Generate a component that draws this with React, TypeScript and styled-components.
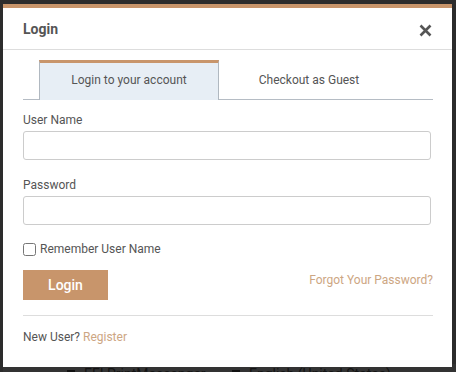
import * as React from "react"
import styled, { createGlobalStyle } from "styled-components"

const tan = "#c8956b"

const GlobalStyle = createGlobalStyle`
  html, body {
    margin: 0;
    background-color: #2c2c2c;
    font-family: Roboto, "Liberation Sans", sans-serif;
  }
`

const Page = styled.div`
  height: 372px;
  overflow: hidden;
  padding: 4px 0 0 3px;
  box-sizing: border-box;
`

const Modal = styled.div`
  position: relative;
  z-index: 1;
  width: 449px;
  background-color: #fff;
  border-top: 4px solid ${tan};
`

const Header = styled.header`
  display: flex;
  align-items: center;
  justify-content: space-between;
  height: 41px;
  padding: 0 20px;
  border-bottom: 1px solid #ddd;
`

const Title = styled.h4`
  margin: 0;
  font-size: 14px;
  font-weight: bold;
  color: #555;
`

const Close = styled.button`
  display: flex;
  padding: 0;
  margin-top: 3px;
  border: 0;
  background: none;
  cursor: pointer;
`

const Body = styled.div`
  padding: 10px 19px 20px 20px;
`

const TabList = styled.div`
  display: flex;
  padding-left: 16px;
  border-bottom: 1px solid #b5bcc4;
`

interface TabProps {
  active?: boolean
}
const Tab = styled.button<TabProps>`
  width: 180px;
  height: 40px;
  margin-bottom: -1px;
  padding: 0 0 4px;
  font-family: inherit;
  font-size: 12px;
  color: #555;
  background-color: ${(p) => p.active ? "#e7eef5" : "transparent"};
  border: 1px solid ${(p) => p.active ? "#b0b8c0" : "transparent"};
  border-top: 3px solid ${(p) => p.active ? tan : "transparent"};
  border-bottom: 0;
`

interface LabelProps {
  gap: number
}
const Label = styled.label<LabelProps>`
  display: block;
  margin: ${(p) => p.gap}px 0 2px;
  font-size: 12px;
  line-height: 18px;
  color: #555;
`

const Input = styled.input`
  display: block;
  box-sizing: border-box;
  width: 408px;
  height: 29px;
  border: 1px solid #ccc;
  border-radius: 3px;
  font-family: inherit;
  font-size: 12px;
`

const CheckRow = styled.label`
  display: flex;
  align-items: center;
  gap: 4px;
  margin-top: 15px;
  font-size: 12px;
  line-height: 18px;
  color: #555;

  input {
    width: 13px;
    height: 13px;
    margin: 0;
  }
`

const ActionRow = styled.div`
  display: flex;
  justify-content: space-between;
  align-items: flex-start;
  margin-top: 12px;
  padding-bottom: 15px;
  border-bottom: 1px solid #ddd;
`

const LoginButton = styled.button`
  width: 85px;
  height: 30px;
  border: 0;
  background-color: ${tan};
  color: #fff;
  font-family: inherit;
  font-size: 14px;
  font-weight: 500;
`

const Link = styled.a`
  color: #cda683;
  font-size: 12px;
  line-height: 20px;
  text-decoration: none;
`

const Footer = styled.p`
  margin: 11px 0 0;
  font-size: 12px;
  line-height: 18px;
  color: #555;
`

const Behind = styled.ul`
  display: flex;
  margin: -3px 0 0;
  padding: 0 0 0 64px;
  list-style: none;
  background-color: #333;
  height: 40px;
`

const BehindItem = styled.li`
  display: flex;
  gap: 9px;
  width: 165px;
  font-size: 14px;
  line-height: 20px;
  white-space: nowrap;
  color: #141414;

  &::before {
    content: "";
    flex: none;
    width: 8px;
    height: 8px;
    margin-top: 6px;
    background-color: #111;
  }
`

const CloseIcon = () => (
  <svg width="13" height="13" viewBox="0 0 13 13">
    <path d="M1.5 1.5 L11.5 11.5 M11.5 1.5 L1.5 11.5" stroke="#555" strokeWidth="2.6" />
  </svg>
)

const App: React.FunctionComponent = () => {
  const [tab, setTab] = React.useState(0)
  return (
    <>
      <GlobalStyle />
      <Page>
        <Modal>
          <Header>
            <Title>Login</Title>
            <Close aria-label="Close"><CloseIcon /></Close>
          </Header>
          <Body>
            <TabList>
              <Tab active={tab === 0} onClick={() => setTab(0)}>Login to your account</Tab>
              <Tab active={tab === 1} onClick={() => setTab(1)}>Checkout as Guest</Tab>
            </TabList>
            <Label gap={11}>User Name</Label>
            <Input type="text" />
            <Label gap={16}>Password</Label>
            <Input type="password" />
            <CheckRow>
              <input type="checkbox" />
              Remember User Name
            </CheckRow>
            <ActionRow>
              <LoginButton>Login</LoginButton>
              <Link href="#">Forgot Your Password?</Link>
            </ActionRow>
            <Footer>New User? <Link href="#">Register</Link></Footer>
          </Body>
        </Modal>
        <Behind>
          <BehindItem>EFI PrintMessenger</BehindItem>
          <BehindItem>English (United States)</BehindItem>
        </Behind>
      </Page>
    </>
  )
}

export default App
